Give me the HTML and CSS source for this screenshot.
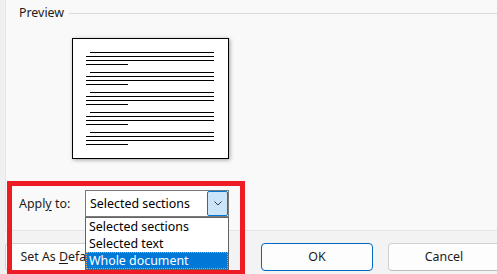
FILE: index.html
```html
<!DOCTYPE html>
<html lang="en">
<head>
<meta charset="utf-8">
<title>Page Setup - Apply to</title>
<link rel="stylesheet" href="styles.css">
</head>
<body>
<div class="dialog">
  <div class="content">
    <div class="group-header">
      <span class="group-title">Preview</span>
      <span class="group-rule"></span>
    </div>
    <div class="preview-page">
      <div class="para"><i class="ln first"></i><i class="ln"></i><i class="ln"></i><i class="ln last"></i></div>
      <div class="para"><i class="ln first"></i><i class="ln"></i><i class="ln"></i><i class="ln last"></i></div>
      <div class="para"><i class="ln first"></i><i class="ln"></i><i class="ln"></i><i class="ln last"></i></div>
      <div class="para"><i class="ln first"></i><i class="ln"></i><i class="ln"></i><i class="ln last"></i></div>
      <div class="para"><i class="ln first"></i><i class="ln"></i><i class="ln"></i><i class="ln last"></i></div>
    </div>
    <div class="apply-row">
      <span class="apply-label">Appl<u>y</u> to:</span>
      <div class="combo">
        <span class="combo-value">Selected sections</span>
        <span class="combo-btn">
          <svg width="8" height="5" viewBox="0 0 8 5"><polyline points="0.5,0.5 4,4 7.5,0.5" fill="none" stroke="#3a3a3a" stroke-width="1"/></svg>
        </span>
        <ul class="combo-list">
          <li>Selected sections</li>
          <li>Selected text</li>
          <li class="selected">Whole document</li>
        </ul>
      </div>
    </div>
  </div>
  <div class="button-bar">
    <button class="btn btn-default">Set As <u>D</u>efault</button>
    <button class="btn btn-ok">OK</button>
    <button class="btn">Cancel</button>
  </div>
</div>
<div class="annotation"></div>
</body>
</html>
```

FILE: styles.css
```css
html, body {
  margin: 0;
  padding: 0;
}

body {
  width: 497px;
  height: 274px;
  overflow: hidden;
  position: relative;
  background: #f9f9f9;
  font-family: "Noto Sans", "Segoe UI", sans-serif;
  font-size: 12.4px;
  line-height: 16px;
  color: #1b1b1b;
}

.dialog {
  display: flex;
  flex-direction: column;
  height: 274px;
  border-left: 5px solid #f0f0f0;
  box-sizing: border-box;
}

.content {
  height: 230px;
  flex: none;
  box-sizing: border-box;
  border-left: 1px solid #e6e6e6;
  padding: 5px 0 0 13px;
  background: #f9f9f9;
}

.group-header {
  display: flex;
  align-items: center;
  gap: 5px;
}

.group-rule {
  flex: 1;
  height: 1px;
  background: #dcdcdc;
}

.preview-page {
  margin: 17px 0 0 53px;
  width: 157px;
  height: 121px;
  box-sizing: border-box;
  border: 1px solid #000;
  background: #fff;
  box-shadow: 1px 1px 4px rgba(0, 0, 0, 0.35);
  padding: 13px 0 0 13px;
  display: flex;
  flex-direction: column;
  gap: 7px;
}

.para {
  display: flex;
  flex-direction: column;
  gap: 3px;
}

.ln {
  display: block;
  height: 1px;
  width: 128px;
  background: #000;
}

.ln.first {
  margin-left: 4px;
  width: 124px;
}

.ln.last {
  width: 42px;
}

.apply-row {
  display: flex;
  align-items: baseline;
  margin-top: 31px;
}

.apply-label {
  width: 66px;
  flex: none;
}

u {
  text-underline-offset: 2px;
}

.combo {
  position: relative;
  width: 144px;
  height: 27px;
  box-sizing: border-box;
  border: 1px solid #7a7a7a;
  background: #fff;
  display: flex;
  align-items: center;
}

.combo-value {
  flex: 1;
  padding-left: 4px;
  line-height: 25px;
  color: #000;
}

.combo-btn {
  width: 21px;
  height: 25px;
  box-sizing: border-box;
  border: 1px solid #0078d7;
  border-radius: 2px;
  background: #cce4f7;
  display: flex;
  align-items: center;
  justify-content: center;
}

.combo-list {
  position: absolute;
  left: -1px;
  top: 26px;
  width: 144px;
  box-sizing: border-box;
  margin: 0;
  padding: 0;
  list-style: none;
  border: 1px solid #646464;
  background: #fff;
  z-index: 5;
}

.combo-list li {
  height: 17px;
  line-height: 17px;
  padding-left: 3px;
  color: #000;
}

.combo-list li.selected {
  background: #0078d7;
  color: #fff;
  outline: 1px dotted #f0a050;
  outline-offset: -1px;
}

.button-bar {
  flex: 1;
  display: flex;
  gap: 15px;
  padding-top: 12px;
  border-top: 1px solid #e5e5e5;
  background: #f3f3f3;
}

.btn {
  flex: none;
  width: 112px;
  height: 28px;
  box-sizing: border-box;
  padding: 0;
  border: 1px solid #d1d1d1;
  border-bottom-color: #bdbdbd;
  border-radius: 4px;
  background: #fdfdfd;
  font: inherit;
  line-height: 26px;
  color: #1b1b1b;
}

.btn-ok {
  margin-left: 129px;
  border-color: #0067c0;
}

.annotation {
  position: absolute;
  left: 7px;
  top: 181px;
  width: 238px;
  height: 94px;
  box-sizing: border-box;
  border: 5px solid #ed1c24;
  z-index: 10;
  pointer-events: none;
}
```
